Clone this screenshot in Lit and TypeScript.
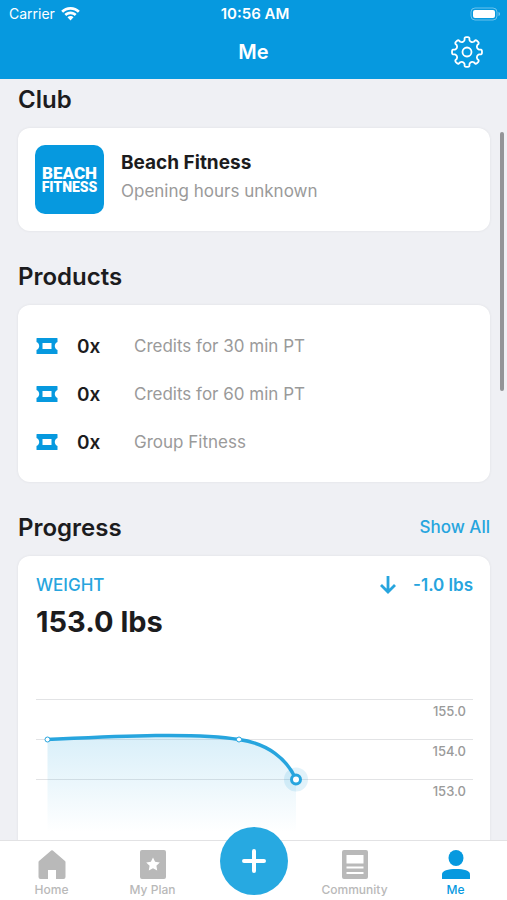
import { LitElement, html, css, svg } from "lit";
import { customElement, property } from "lit/decorators.js";

interface Product {
  count: number;
  name: string;
}

const PRODUCTS: Product[] = [
  { count: 0, name: "Credits for 30 min PT" },
  { count: 0, name: "Credits for 60 min PT" },
  { count: 0, name: "Group Fitness" },
];

const LEVELS = ["155.0", "154.0", "153.0"];

const gearPath = (() => {
  // Eight rounded teeth, each a flat tip followed by a curved valley.
  const teeth = 8;
  const step = (Math.PI * 2) / teeth;
  const at = (r: number, a: number) =>
    `${(17 + r * Math.sin(a)).toFixed(2)} ${(17 - r * Math.cos(a)).toFixed(2)}`;
  let d = "";
  for (let i = 0; i < teeth; i++) {
    const a = i * step;
    d += `${i ? "L" : "M"}${at(14.2, a - 0.17)}Q${at(15, a - 0.14)} ${at(15, a - 0.07)}L${at(15, a + 0.07)}`;
    d += `Q${at(15, a + 0.14)} ${at(14.2, a + 0.17)}L${at(12.3, a + 0.2)}`;
    d += `C${at(10.6, a + 0.3)} ${at(10.6, a + step - 0.3)} ${at(12.3, a + step - 0.2)}`;
  }
  return d + "Z";
})();

@customElement("status-bar")
export class StatusBar extends LitElement {
  static styles = css`
    :host {
      display: grid;
      grid-template-columns: 1fr auto 1fr;
      align-items: center;
      height: 27px;
      padding: 0 6px 0 9px;
      font-size: 14px;
    }
    .carrier {
      display: flex;
      align-items: center;
      gap: 6px;
    }
    .time {
      font-size: 15px;
      font-weight: 600;
    }
    .battery {
      justify-self: end;
    }
    svg {
      display: block;
    }
  `;
  render() {
    return html`
      <span class="carrier">
        Carrier
        <svg width="19" height="14" viewBox="0 0 19 14" fill="#fff" aria-hidden="true">
          <path d="M9.5 0C5.8 0 2.6 1.4.2 3.7L2.1 5.7C4.1 3.8 6.6 2.7 9.5 2.7s5.4 1.1 7.4 3l1.9-2C16.4 1.4 13.2 0 9.5 0Z" />
          <path d="M9.5 4.5c-2.4 0-4.5.9-6.1 2.5l1.9 2c1.1-1.1 2.5-1.8 4.2-1.8s3.1.7 4.2 1.8l1.9-2C14 5.4 11.9 4.5 9.5 4.5Z" />
          <path d="M9.5 9c-1.2 0-2.2.5-3 1.2l3 3.3 3-3.3C11.7 9.5 10.7 9 9.5 9Z" />
        </svg>
      </span>
      <span class="time">10:56 AM</span>
      <svg class="battery" width="31" height="14" viewBox="0 0 31 14" aria-hidden="true">
        <rect x="1" y="1" width="26" height="12" rx="4" fill="none" stroke="#fff" stroke-opacity=".4" />
        <rect x="3" y="3" width="22" height="8" rx="2" fill="#fff" />
        <path d="M28.5 5v4c1-.3 1.5-1 1.5-2s-.5-1.7-1.5-2Z" fill="#fff" fill-opacity=".45" />
      </svg>
    `;
  }
}

@customElement("weight-chart")
export class WeightChart extends LitElement {
  static styles = css`
    :host {
      display: block;
      position: relative;
    }
    .level {
      box-sizing: border-box;
      height: 40px;
      padding: 2px 7px 0 0;
      border-top: 1px solid #e2e3e5;
      text-align: right;
      font-size: 13px;
      line-height: 18px;
      font-weight: 500;
      color: #9a9a9a;
    }
    .dates {
      display: flex;
      justify-content: space-between;
      padding: 17px 12px 0;
      font-size: 13px;
      line-height: 18px;
      color: #9a9a9a;
    }
    .plot {
      position: absolute;
      inset: 0 auto auto 0;
      width: 100%;
      height: auto;
    }
  `;
  render() {
    return html`
      ${LEVELS.map((l) => html`<div class="level">${l}</div>`)}
      <div class="dates"><span>6 May 20</span><span>31 May 20</span></div>
      <svg class="plot" viewBox="0 0 437 140" role="img" aria-label="Weight over time">
        <defs>
          <linearGradient id="fade" x1="0" y1="0" x2="0" y2="1">
            <stop offset="0" stop-color="#27a5de" stop-opacity=".18" />
            <stop offset="1" stop-color="#27a5de" stop-opacity="0" />
          </linearGradient>
        </defs>
        <path fill="url(#fade)" d="M11.5 40.5C75 37.5 158 33 203 40.5C232 44.5 251 60 260 80.5V133H11.5Z" />
        <path fill="none" stroke="#27a5de" stroke-width="3.5" d="M11.5 40.5C75 37.5 158 33 203 40.5C232 44.5 251 60 260 80.5" />
        <circle cx="260" cy="80.5" r="12" fill="#27a5de" fill-opacity=".14" />
        <circle cx="11.5" cy="40.5" r="2.5" fill="#fff" stroke="#27a5de" />
        <circle cx="203" cy="40.5" r="2.5" fill="#fff" stroke="#27a5de" />
        <circle cx="260" cy="80.5" r="4.5" fill="#fff" stroke="#27a5de" stroke-width="3" />
      </svg>
    `;
  }
}

const TAB_ICONS = {
  home: svg`<path d="M14.2 1.6a1.2 1.2 0 0 1 1.6 0L28 12a1.5 1.5 0 0 1 .5 1V28a2 2 0 0 1-2 2H19v-9h-8v9H3.5a2 2 0 0 1-2-2V13a1.5 1.5 0 0 1 .5-1Z" />`,
  plan: svg`<path fill-rule="evenodd" d="M4 1h22a2 2 0 0 1 2 2v25a2 2 0 0 1-2 2H4a2 2 0 0 1-2-2V3a2 2 0 0 1 2-2Zm11 7.5-2.1 4.3-4.7.7 3.4 3.3-.8 4.7 4.2-2.2 4.2 2.2-.8-4.7 3.4-3.3-4.7-.7Z" />`,
  community: svg`<path fill-rule="evenodd" d="M4 1h22a2 2 0 0 1 2 2v25a2 2 0 0 1-2 2H4a2 2 0 0 1-2-2V3a2 2 0 0 1 2-2Zm2.5 5v8.5h17V6Zm0 11.5v2h17v-2Zm0 5.5v2h17v-2Z" />`,
  me: svg`<ellipse cx="15" cy="9" rx="7.5" ry="8" /><path d="M1 29.5v-4C1 21.5 7 20 15 20s14 1.5 14 5.5v4a.5.5 0 0 1-.5.5h-27a.5.5 0 0 1-.5-.5Z" />`,
};

@customElement("tab-bar")
export class TabBar extends LitElement {
  static styles = css`
    :host {
      display: block;
      background: #fff;
      border-top: 1px solid #e2e2e4;
    }
    nav {
      display: grid;
      grid-template-columns: repeat(5, 1fr);
      height: 59px;
      padding: 0 1px;
    }
    .tab {
      display: flex;
      flex-direction: column;
      align-items: center;
      gap: 2px;
      padding-top: 8px;
      color: #b9b9b9;
      text-decoration: none;
      font-size: 12px;
      line-height: 16px;
      font-weight: 500;
    }
    .tab.active {
      color: #0699df;
    }
    .add {
      position: relative;
      top: -14px;
      justify-self: center;
      width: 68px;
      height: 68px;
      padding: 0;
      border: 0;
      border-radius: 50%;
      background: #27a9e1;
      display: grid;
      place-items: center;
    }
  `;
  private tab(icon: keyof typeof TAB_ICONS, label: string, active = false) {
    return html`<a class="tab ${active ? "active" : ""}" href="#${icon}">
      <svg width="30" height="31" viewBox="0 0 30 31" fill="currentColor" aria-hidden="true">${TAB_ICONS[icon]}</svg>
      ${label}
    </a>`;
  }
  render() {
    return html`<nav>
      ${this.tab("home", "Home")} ${this.tab("plan", "My Plan")}
      <button class="add" aria-label="Add">
        <svg width="26" height="26" viewBox="0 0 26 26" stroke="#fff" stroke-width="4" stroke-linecap="round" aria-hidden="true">
          <path d="M13 3v20M3 13h20" />
        </svg>
      </button>
      ${this.tab("community", "Community")} ${this.tab("me", "Me", true)}
    </nav>`;
  }
}

@customElement("product-row")
export class ProductRow extends LitElement {
  @property({ type: Number }) count = 0;
  @property() name = "";
  static styles = css`
    :host {
      display: grid;
      grid-template-columns: 41px 57px 1fr;
      align-items: center;
      height: 48px;
    }
    .count {
      font-size: 19px;
      font-weight: 600;
      color: #1c1c1e;
    }
    .name {
      font-size: 17px;
      color: #9a9a9a;
    }
  `;
  render() {
    return html`
      <svg width="22" height="16" viewBox="0 0 22 16" fill="#0699df" aria-hidden="true">
        <path fill-rule="evenodd" d="M1 0h20a.5.5 0 0 1 .5.5V4C19.5 5 18.8 6.5 18.8 8s.7 3 2.7 4v3.5a.5.5 0 0 1-.5.5H1a.5.5 0 0 1-.5-.5V12C2.500 11 3.200 9.500 3.200 8S2.500 5 .5 4V.5A.5.5 0 0 1 1 0ZM6.500 5v6h9V5Z" />
      </svg>
      <span class="count">${this.count}x</span>
      <span class="name">${this.name}</span>
    `;
  }
}

@customElement("app-root")
export class AppRoot extends LitElement {
  static styles = css`
    :host {
      display: flex;
      flex-direction: column;
      height: 100vh;
      background: #eff0f4;
      color: #1c1c1e;
      font-family: Inter, "Liberation Sans", sans-serif;
    }
    header {
      flex: none;
      padding-bottom: 3px;
      background: #0699df;
      color: #fff;
    }
    .title-bar {
      display: grid;
      grid-template-columns: 1fr auto 1fr;
      align-items: center;
      height: 49px;
      padding: 0 23px;
    }
    h1 {
      grid-column: 2;
      margin: 0;
      font-size: 20px;
      font-weight: 600;
    }
    .settings {
      justify-self: end;
      padding: 0;
      border: 0;
      background: none;
      color: inherit;
    }
    .settings svg {
      display: block;
    }
    .viewport {
      position: relative;
      flex: 1;
      min-height: 0;
      overflow: hidden;
    }
    .content {
      padding: 4px 17px 0 18px;
    }
    .heading {
      display: flex;
      justify-content: space-between;
      align-items: center;
      height: 32px;
      margin-bottom: 13px;
    }
    h2 {
      margin: 0;
      font-size: 24px;
      font-weight: 600;
    }
    .card {
      background: #fff;
      border-radius: 12px;
      box-shadow: 0 0 3px rgb(0 0 0 / 7%);
      margin-bottom: 29px;
    }
    .club {
      display: flex;
      gap: 17px;
      padding: 17px;
    }
    .logo {
      display: flex;
      flex-direction: column;
      align-items: center;
      justify-content: center;
      width: 69px;
      height: 69px;
      border-radius: 10px;
      background: #0699df;
      color: #fff;
      font-family: Roboto, Inter, sans-serif;
      font-weight: 900;
    }
    .logo-top {
      font-size: 17px;
      line-height: 15px;
    }
    .logo-bottom {
      font-size: 14px;
      line-height: 13px;
    }
    .club-text {
      padding-top: 4px;
      line-height: 28px;
    }
    h3 {
      margin: 0;
      font-size: 19px;
      font-weight: 700;
    }
    .hours {
      margin: 0;
      font-size: 17px;
      color: #9a9a9a;
    }
    .products {
      padding: 17px 18px 16px;
    }
    .link {
      color: #27a5de;
      text-decoration: none;
      font-size: 17px;
      font-weight: 500;
    }
    .progress {
      padding: 18px 17px 18px 18px;
    }
    .metric {
      display: flex;
      align-items: center;
      line-height: 22px;
      font-size: 17px;
      font-weight: 500;
      color: #27a5de;
    }
    .change {
      display: flex;
      align-items: center;
      gap: 16px;
      margin-left: auto;
      font-weight: 600;
    }
    .value {
      margin: 8px 0 59px;
      font-size: 29px;
      line-height: 36px;
      font-weight: 700;
    }
    .thumb {
      position: absolute;
      top: 53px;
      right: 3px;
      width: 4px;
      height: 259px;
      border-radius: 2px;
      background: #939497;
    }
    tab-bar {
      flex: none;
      z-index: 1;
    }
  `;
  render() {
    return html`
      <header>
        <status-bar></status-bar>
        <div class="title-bar">
          <h1>Me</h1>
          <button class="settings" aria-label="Settings">
            <svg width="34" height="34" viewBox="0 0 34 34" fill="none" stroke="#fff" stroke-width="1.8" stroke-linejoin="round" aria-hidden="true">
              <path d=${gearPath} />
              <circle cx="17" cy="17" r="4.5" />
            </svg>
          </button>
        </div>
      </header>
      <div class="viewport">
        <main class="content">
          <div class="heading"><h2>Club</h2></div>
          <section class="card club">
            <div class="logo">
              <span class="logo-top">BEACH</span>
              <span class="logo-bottom">FITNESS</span>
            </div>
            <div class="club-text">
              <h3>Beach Fitness</h3>
              <p class="hours">Opening hours unknown</p>
            </div>
          </section>
          <div class="heading"><h2>Products</h2></div>
          <section class="card products">
            ${PRODUCTS.map((p) => html`<product-row .count=${p.count} .name=${p.name}></product-row>`)}
          </section>
          <div class="heading">
            <h2>Progress</h2>
            <a class="link" href="#progress">Show All</a>
          </div>
          <section class="card progress">
            <div class="metric">
              <span>WEIGHT</span>
              <span class="change">
                <svg width="18" height="20" viewBox="0 0 18 20" fill="none" stroke="currentColor" stroke-width="2.8" aria-hidden="true">
                  <path d="M9 1v16M2 10l7 7 7-7" />
                </svg>
                -1.0 lbs
              </span>
            </div>
            <p class="value">153.0 lbs</p>
            <weight-chart></weight-chart>
          </section>
        </main>
        <div class="thumb"></div>
      </div>
      <tab-bar></tab-bar>
    `;
  }
}
